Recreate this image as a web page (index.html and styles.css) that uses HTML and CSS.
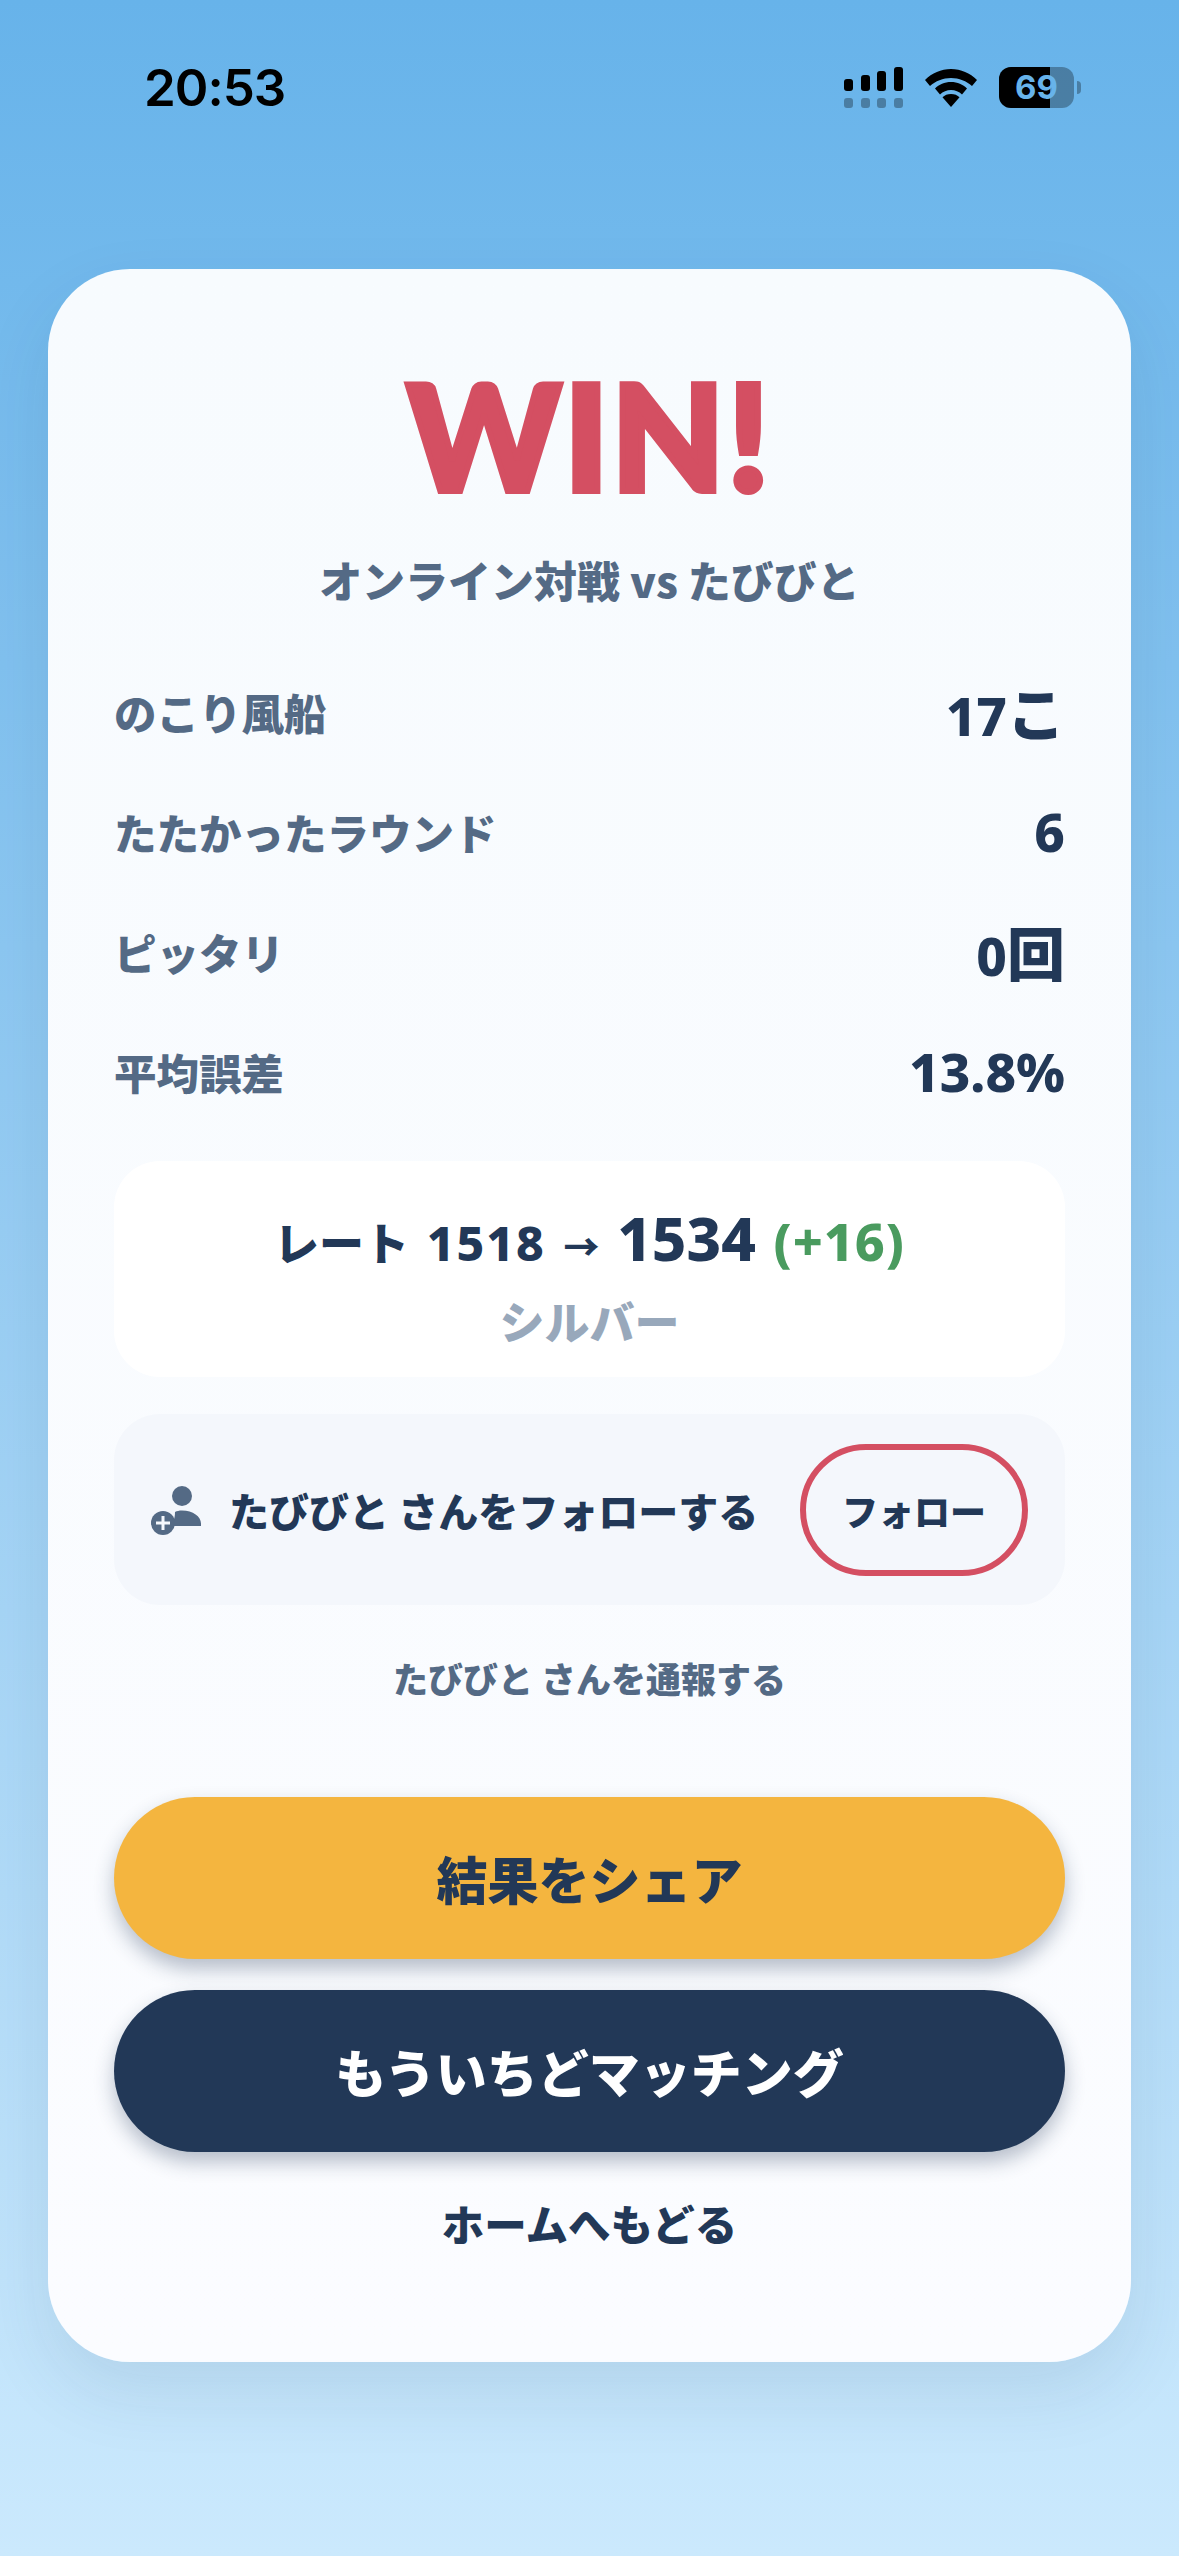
FILE: index.html
```html
<!DOCTYPE html>
<html lang="ja">
<head>
<meta charset="utf-8">
<title>WIN!</title>
<link rel="stylesheet" href="styles.css">
</head>
<body>
<div class="page">
  <header class="status">
    <span class="time">20:53</span>
    <div class="status-icons">
      <svg class="signal" width="60" height="42" viewBox="0 0 60 42">
        <g fill="#000"><rect x="0" y="12" width="9" height="12" rx="3"/><rect x="17" y="8" width="9" height="16" rx="3"/><rect x="33" y="4" width="9" height="20" rx="3"/><rect x="50" y="0" width="9" height="24" rx="3"/></g>
        <g fill="#000" opacity=".3"><rect x="0" y="31" width="9" height="10" rx="3"/><rect x="17" y="31" width="9" height="10" rx="3"/><rect x="33" y="31" width="9" height="10" rx="3"/><rect x="50" y="31" width="9" height="10" rx="3"/></g>
      </svg>
      <svg class="wifi" width="52" height="38" viewBox="0 0 52 38">
        <path d="M26 0C16 0 7 4 0 11l5 6c5.500-5 13-8 21-8s15.500 3 21 8l5-6C45 4 36 0 26 0z" fill="#000"/>
        <path d="M26 13c-6.500 0-12 2.500-16 6.500l5 6c3-3 6.800-4.500 11-4.500s8 1.500 11 4.500l5-6c-4-4-9.500-6.500-16-6.500z" fill="#000"/>
        <path d="M26 25c-3.500 0-6.500 1.200-8.500 3.300L26 38l8.500-9.700C32.500 26.200 29.500 25 26 25z" fill="#000"/>
      </svg>
      <div class="battery"><div class="battery-fill"></div><span class="battery-num">69</span></div>
      <div class="battery-cap"></div>
    </div>
  </header>

  <main class="card">
    <h1 class="win">WIN!</h1>
    <p class="subtitle">オンライン対戦 vs たびびと</p>

    <dl class="stats">
      <div class="stat"><dt>のこり風船</dt><dd>17<span class="unit">こ</span></dd></div>
      <div class="stat"><dt>たたかったラウンド</dt><dd>6</dd></div>
      <div class="stat"><dt>ピッタリ</dt><dd>0<span class="unit">回</span></dd></div>
      <div class="stat"><dt>平均誤差</dt><dd>13.8%</dd></div>
    </dl>

    <section class="rate">
      <div class="rate-line">レート <span class="rate-old">1518</span> <span class="rate-arrow">→</span> <span class="rate-new">1534</span> <span class="rate-diff">(+16)</span></div>
      <div class="rank">シルバー</div>
    </section>

    <section class="follow">
      <svg class="follow-icon" width="50" height="50" viewBox="0 0 50 50">
        <circle cx="31" cy="10" r="10" fill="#546a85"/>
        <path d="M18 40c4-3 6-7 6-14 2-1 4-1.500 7-1.500 11 0 19 6 19 13v2.500z" fill="#546a85"/>
        <circle cx="12" cy="37" r="12" fill="#546a85"/>
        <path d="M12 30v14M5 37h14" stroke="#f4f7fc" stroke-width="3"/>
      </svg>
      <span class="follow-text">たびびと さんをフォローする</span>
      <span class="follow-btn">フォロー</span>
    </section>

    <p class="report">たびびと さんを通報する</p>

    <div class="btn btn-share">結果をシェア</div>
    <div class="btn btn-again">もういちどマッチング</div>
    <p class="home">ホームへもどる</p>
  </main>
</div>
</body>
</html>
```
FILE: styles.css
```css
* { box-sizing: border-box; margin: 0; padding: 0; }
html, body { width: 1179px; height: 2556px; overflow: hidden; }
body {
  background: linear-gradient(180deg, #67b3ea 0%, #cbe9fd 100%);
  font-family: "Noto Sans CJK JP", "Noto Sans", sans-serif;
  font-weight: 900;
  color: #223857;
}
.page { display: flex; flex-direction: column; height: 2556px; padding: 0 48px; }
.status {
  height: 269px;
  display: flex;
  justify-content: space-between;
  align-items: flex-start;
  padding: 58px 50px 0 96px;
}
.time { font-family: Inter, "Liberation Sans", sans-serif; font-weight: 600; font-size: 51px; line-height: 60px; color: #000; letter-spacing: -1px; }
.status-icons { display: flex; align-items: flex-start; padding-top: 9px; }
.signal { margin-right: 21px; }
.wifi { margin-right: 22px; margin-top: 2px; }
.battery { position: relative; width: 75px; height: 41px; border-radius: 12px; overflow: hidden; background: rgba(0,0,0,.3); }
.battery-fill { width: 51px; height: 41px; background: #000; }
.battery-num { position: absolute; left: 0; right: 0; top: 0; text-align: center; font-family: Inter, "Liberation Sans", sans-serif; font-size: 33px; line-height: 41px; font-weight: 700; color: #67b3ea; }
.battery-cap { width: 4px; height: 13px; margin: 14px 0 0 3px; border-radius: 0 4px 4px 0; background: rgba(0,0,0,.3); }

.card {
  width: 1083px;
  height: 2093px;
  background: linear-gradient(180deg, #f7fbfe, #fbfcff);
  border-radius: 82px;
  box-shadow: 0 30px 70px rgba(34,56,87,.1);
  padding: 0 66px;
  text-align: center;
}
.win { font-family: Lato, sans-serif; font-weight: 900; font-size: 146px; line-height: 150px; margin-top: 91px; color: #d44f62; -webkit-text-stroke: 6px #d44f62; letter-spacing: 3px; }
.subtitle { font-size: 43px; line-height: 60px; margin-top: 39px; color: #546a85; }
.stats { margin-top: 42px; }
.stat { display: flex; justify-content: space-between; align-items: center; height: 120px; }
.stat dt { font-size: 42.500px; color: #546a85; }
.stat dd { font-size: 53px; color: #223857; font-weight: 800; font-family: "Noto Sans", sans-serif; }
.unit { font-family: "Noto Sans CJK JP", sans-serif; font-size: 58px; }

.rate { margin-top: 30px; height: 216px; background: #fff; border-radius: 46px; padding-top: 42px; }
.rate-line { font-size: 45px; line-height: 70px; font-family: "Noto Sans", "Noto Sans CJK JP", sans-serif; font-weight: 800; word-spacing: 6px; }
.rate-old { font-size: 48px; letter-spacing: 2px; }
.rate-arrow { font-size: 36px; }
.rate-new { font-size: 60px; }
.rate-diff { color: #4a9b5f; font-size: 52px; letter-spacing: 1px; }
.rank { font-size: 45px; line-height: 60px; margin-top: 8px; color: #98a8bb; }

.follow {
  margin-top: 37px;
  height: 191px;
  background: #f4f7fc;
  border-radius: 46px;
  display: flex;
  align-items: center;
  padding: 0 37px;
}
.follow-icon { flex: none; margin-top: 2px; }
.follow-text { font-size: 40px; margin-left: 28px; flex: 1; text-align: left; white-space: nowrap; }
.follow-btn {
  width: 228px;
  height: 132px;
  border: 6px solid #d44f62;
  border-radius: 66px;
  font-size: 36px;
  display: flex;
  align-items: center;
  justify-content: center;
}
.report { font-size: 35px; line-height: 50px; margin-top: 48px; color: #546a85; }
.btn {
  border-radius: 81px;
  height: 162px;
  display: flex;
  align-items: center;
  justify-content: center;
  font-size: 51px;
  box-shadow: 0 10px 20px rgba(34,56,87,.32);
}
.btn-share { margin-top: 94px; background: #f4b53f; color: #223857; }
.btn-again { margin-top: 31px; background: #223857; color: #fff; }
.home { font-size: 42.500px; line-height: 60px; margin-top: 41px; }
```
